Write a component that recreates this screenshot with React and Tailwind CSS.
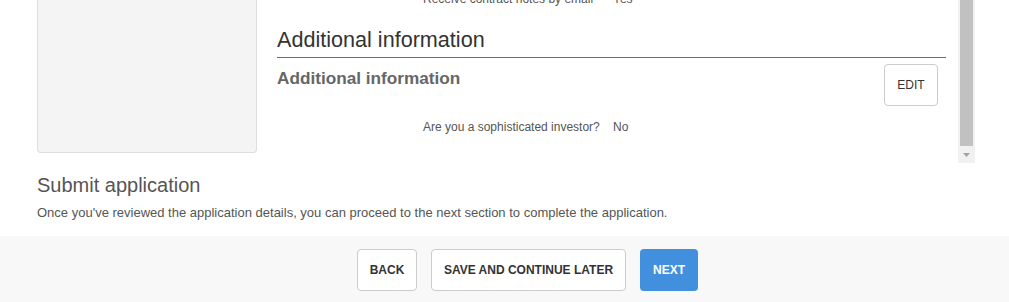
export default function App() {
  const font = { fontFamily: '"Liberation Sans", Arial, sans-serif' };
  return (
    <div style={font} className="w-[1009px] h-[302px] overflow-hidden bg-white flex flex-col">
      {/* Top region */}
      <div className="flex h-[163px] pl-[37px]">
        <div className="w-[220px] h-[153px] bg-[#f4f4f4] border-x border-b border-[#dedede] rounded-b-[4px]" />
        <div className="ml-[20px] flex w-[698px] h-[163px]">
          <div className="w-[681px] h-[163px] overflow-hidden">
            <div className="mt-[-8px] h-[14px] flex text-[12px] leading-[14px] text-[#555]">
              <span className="ml-[146px] w-[190px]">Receive contract notes by email</span>
              <span>Yes</span>
            </div>
            <h2 className="mt-[21px] mr-[12px] text-[21.6px] leading-[26px] text-[#333] font-normal pb-[4px] border-b border-[#6f6f6f]">
              Additional information
            </h2>
            <div className="flex justify-between items-start mr-[20px]">
              <h3 className="mt-[10px] text-[17.2px] leading-[20px] font-bold text-[#666]">Additional information</h3>
              <button className="mt-[6px] w-[54px] h-[42px] border border-[#cccccc] rounded-[4px] bg-white text-[12px] text-[#333]">
                EDIT
              </button>
            </div>
            <div className="mt-[14px] flex text-[12px] leading-[14px] text-[#555]">
              <span className="ml-[146px] w-[190px]">Are you a sophisticated investor?</span>
              <span>No</span>
            </div>
          </div>
          {/* scrollbar */}
          <div className="w-[17px] h-[163px] bg-[#f1f1f1] flex flex-col items-center">
            <div className="w-[13px] h-[146px] bg-[#c1c1c1]" />
            <div className="flex-1 flex items-center justify-center">
              <svg width="7" height="4" viewBox="0 0 7 4">
                <path d="M0 0 L7 0 L3.5 4 Z" fill="#a3a3a3" />
              </svg>
            </div>
          </div>
        </div>
      </div>

      {/* Submit application */}
      <div className="pl-[37px]">
        <h2 className="mt-[10px] text-[20px] leading-[24px] font-normal text-[#555]">Submit application</h2>
        <p className="mt-[8px] text-[13px] leading-[15px] text-[#555]">
          Once you've reviewed the application details, you can proceed to the next section to complete the application.
        </p>
      </div>

      {/* Footer */}
      <div className="mt-[16px] flex-1 bg-[#f8f8f8] pt-[13px] pl-[357px] flex items-start gap-[14px]">
        <button className="w-[60px] h-[42px] border border-[#cccccc] rounded-[4px] bg-white text-[12px] font-bold text-[#333]">
          BACK
        </button>
        <button className="w-[195px] h-[42px] border border-[#cccccc] rounded-[4px] bg-white text-[12px] font-bold text-[#333]">
          SAVE AND CONTINUE LATER
        </button>
        <button className="w-[58px] h-[42px] rounded-[4px] bg-[#428fde] text-[12px] font-bold text-white">
          NEXT
        </button>
      </div>
    </div>
  );
}
